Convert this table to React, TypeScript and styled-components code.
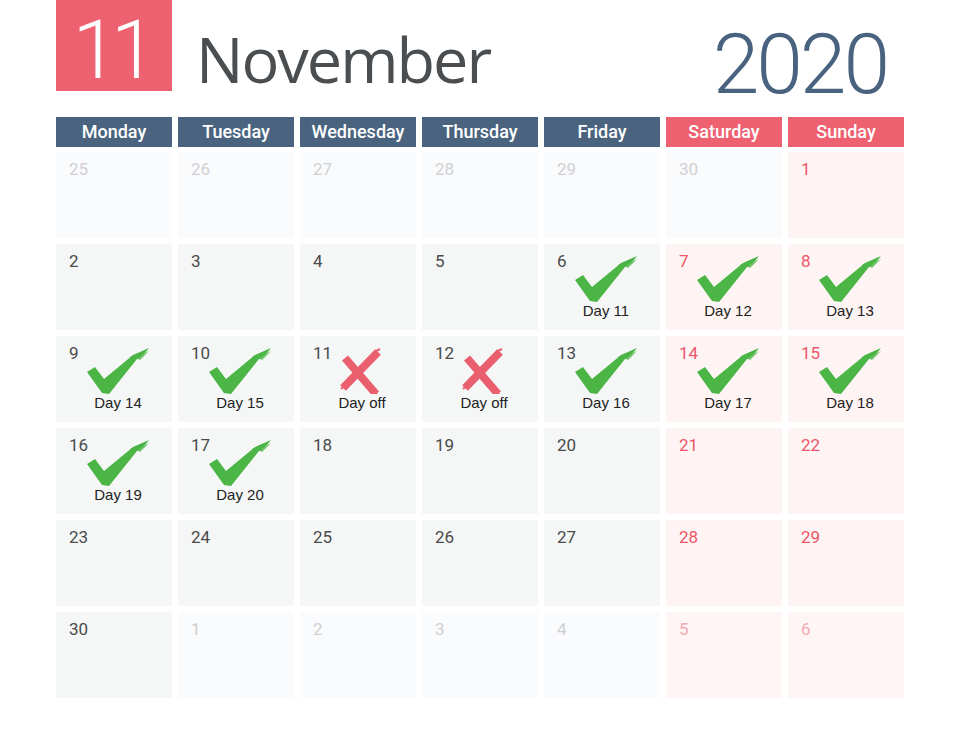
import styled, { createGlobalStyle } from "styled-components";

const GlobalStyle = createGlobalStyle`
  html, body {
    margin: 0;
    padding: 0;
    background: #ffffff;
  }
`;

type Tone = "day" | "weekend" | "muted" | "mutedWeekend";
type Mark = "check" | "off";

interface Cell {
  n: number;
  tone: Tone;
  mark?: Mark;
  label?: string;
}

const d = (n: number, tone: Tone = "day", mark?: Mark, label?: string): Cell => ({
  n,
  tone,
  mark,
  label,
});

const dayNames = ["Monday", "Tuesday", "Wednesday", "Thursday", "Friday", "Saturday", "Sunday"];

const weeks: Cell[][] = [
  [d(25, "muted"), d(26, "muted"), d(27, "muted"), d(28, "muted"), d(29, "muted"), d(30, "muted"), d(1, "weekend")],
  [d(2), d(3), d(4), d(5), d(6, "day", "check", "Day 11"), d(7, "weekend", "check", "Day 12"), d(8, "weekend", "check", "Day 13")],
  [
    d(9, "day", "check", "Day 14"),
    d(10, "day", "check", "Day 15"),
    d(11, "day", "off", "Day off"),
    d(12, "day", "off", "Day off"),
    d(13, "day", "check", "Day 16"),
    d(14, "weekend", "check", "Day 17"),
    d(15, "weekend", "check", "Day 18"),
  ],
  [d(16, "day", "check", "Day 19"), d(17, "day", "check", "Day 20"), d(18), d(19), d(20), d(21, "weekend"), d(22, "weekend")],
  [d(23), d(24), d(25), d(26), d(27), d(28, "weekend"), d(29, "weekend")],
  [d(30), d(1, "muted"), d(2, "muted"), d(3, "muted"), d(4, "muted"), d(5, "mutedWeekend"), d(6, "mutedWeekend")],
];

const toneBg: Record<Tone, string> = {
  day: "#f5f7f7",
  weekend: "#fff4f4",
  muted: "#fafbfc",
  mutedWeekend: "#fff5f5",
};

const toneColor: Record<Tone, string> = {
  day: "#4a4a4a",
  weekend: "#ec5669",
  muted: "#d0d0d2",
  mutedWeekend: "#f2aab4",
};

function CheckMark() {
  return (
    <svg width="62" height="46" viewBox="0 0 62 46">
      <path
        d="M0,24 L8,19 L17,31 L46,7 L62,0 L58,5 L50,11 L22,46 L15,45 Z"
        fill="#4bb546"
      />
      <path d="M43,9 L61,1 L46,11 Z" fill="#4bb546" />
      <path d="M49,10 L62,3 L53,12 Z" fill="#4bb546" opacity="0.8" />
    </svg>
  );
}

function CrossMark() {
  return (
    <svg width="62" height="46" viewBox="0 0 62 46">
      <g stroke="#ea5f6e" strokeLinecap="butt">
        <line x1="14" y1="10" x2="45" y2="46" strokeWidth="8" />
        <line x1="47" y1="4" x2="12" y2="40" strokeWidth="8" />
        <line x1="42" y1="44" x2="47" y2="47" strokeWidth="2" />
        <line x1="10" y1="41" x2="17" y2="35" strokeWidth="2" />
        <line x1="45" y1="3" x2="49" y2="1" strokeWidth="2" />
      </g>
    </svg>
  );
}

export default function App() {
  return (
    <Page>
      <GlobalStyle />
      <TopBar>
        <DateBox>
          <DateDigits>11</DateDigits>
        </DateBox>
        <MonthTitle>November</MonthTitle>
        <YearTitle>2020</YearTitle>
      </TopBar>
      <WeekHeader>
        {dayNames.map((name, i) => (
          <DayName key={name} $weekend={i >= 5}>
            {name}
          </DayName>
        ))}
      </WeekHeader>
      <MonthGrid>
        {weeks.flat().map((cell, i) => (
          <DayCell key={i} $tone={cell.tone}>
            <DayNumber $tone={cell.tone}>{cell.n}</DayNumber>
            {cell.mark && (
              <Stamp>
                {cell.mark === "check" ? <CheckMark /> : <CrossMark />}
                <StampLabel>{cell.label}</StampLabel>
              </Stamp>
            )}
          </DayCell>
        ))}
      </MonthGrid>
    </Page>
  );
}

const Page = styled.div`
  width: 848px;
  padding-left: 56px;
  padding-bottom: 40px;
`;

const TopBar = styled.div`
  display: flex;
  align-items: flex-start;
  height: 91px;
`;

const DateBox = styled.div`
  width: 116px;
  height: 91px;
  background: #ee6171;
  display: flex;
  justify-content: center;
  align-items: flex-start;
  padding-right: 6px;
  box-sizing: border-box;
`;

const DateDigits = styled.span`
  margin-top: 9px;
  font-family: Roboto, "Liberation Sans", sans-serif;
  font-weight: 300;
  font-size: 82px;
  line-height: 82px;
  letter-spacing: -7px;
  color: #ffffff;
`;

const MonthTitle = styled.div`
  margin-left: 24px;
  margin-top: 27px;

  font-family: "Open Sans", "Liberation Sans", sans-serif;
  font-weight: 400;
  font-size: 63px;
  line-height: 1;
  letter-spacing: -2px;
  color: #4b4e50;
`;

const YearTitle = styled.div`
  margin-left: auto;
  margin-right: 17px;
  margin-top: 23px;

  font-family: Roboto, "Liberation Sans", sans-serif;
  font-weight: 300;
  font-size: 84px;
  line-height: 1;
  letter-spacing: -3px;
  color: #48627f;
`;

const WeekHeader = styled.div`
  display: grid;
  grid-template-columns: repeat(7, 116px);
  column-gap: 6px;
  margin-top: 26px;
  margin-bottom: 5px;
`;

const DayName = styled.div<{ $weekend: boolean }>`
  height: 30px;
  background: ${(p) => (p.$weekend ? "#ee6171" : "#4a6480")};
  color: #ffffff;
  text-align: center;

  font-family: Roboto, "Liberation Sans", sans-serif;
  font-weight: 500;
  font-size: 18px;
  line-height: 30px;
`;

const MonthGrid = styled.div`
  display: grid;
  grid-template-columns: repeat(7, 116px);
  grid-auto-rows: 86px;
  gap: 6px;
`;

const DayCell = styled.div<{ $tone: Tone }>`
  display: grid;
  grid-template-columns: 100%;
  grid-template-rows: 100%;
  background: ${(p) => toneBg[p.$tone]};
`;

const DayNumber = styled.div<{ $tone: Tone }>`
  grid-area: 1 / 1;
  align-self: start;
  padding: 7px 0 0 13px;

  font-family: Roboto, "Liberation Sans", sans-serif;
  font-weight: 400;
  font-size: 17px;
  line-height: 20px;
  color: ${(p) => toneColor[p.$tone]};
`;

const Stamp = styled.div`
  grid-area: 1 / 1;
  display: flex;
  flex-direction: column;
  align-items: center;
  padding-top: 12px;
  padding-left: 8px;
`;

const StampLabel = styled.div`
  font-family: "Liberation Sans", Arial, sans-serif;
  font-size: 15px;
  line-height: 17px;
  color: #222222;
`;
